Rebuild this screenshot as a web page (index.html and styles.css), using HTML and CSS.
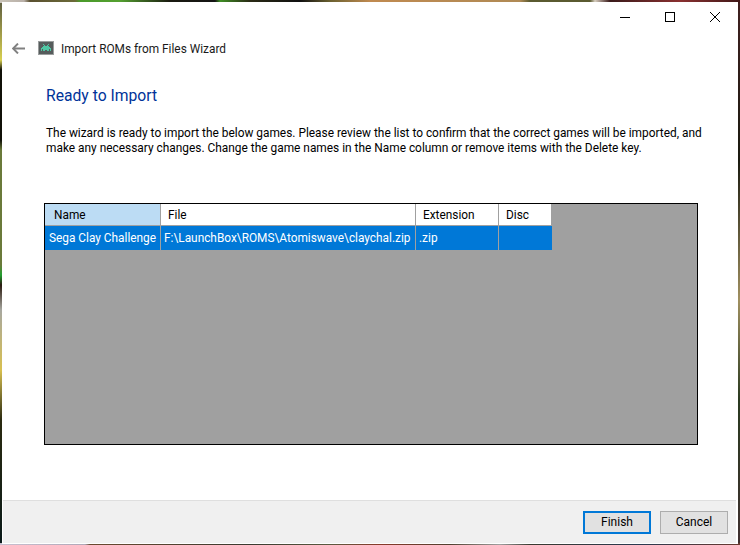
FILE: index.html
```html
<!DOCTYPE html>
<html lang="en">
<head>
    <meta charset="UTF-8">
    <meta name="viewport" content="width=device-width, initial-scale=1.0">
    <title>Import ROMs from Files Wizard</title>
    <link rel="stylesheet" href="styles.css">
</head>
<body>
    <div class="window">
        <div class="caption">
            <svg class="win-icon" width="10" height="10" viewBox="0 0 10 10" fill="none" stroke="#000" stroke-width="1">
                <line x1="0" y1="5.5" x2="10" y2="5.5"/>
            </svg>
            <svg class="win-icon" width="10" height="10" viewBox="0 0 10 10" fill="none" stroke="#000" stroke-width="1">
                <rect x="0.5" y="0.5" width="9" height="9"/>
            </svg>
            <svg class="win-icon" width="10" height="10" viewBox="0 0 10 10" fill="none" stroke="#000" stroke-width="1">
                <line x1="0" y1="0" x2="10" y2="10"/>
                <line x1="10" y1="0" x2="0" y2="10"/>
            </svg>
        </div>

        <div class="wizard-nav">
            <svg class="back-icon" width="13" height="11" viewBox="0 0 13 11" fill="none" stroke="#808080" stroke-width="2">
                <line x1="1" y1="5.5" x2="13" y2="5.5"/>
                <path d="M6 0.6 L1.1 5.5 L6 10.4"/>
            </svg>
            <svg class="app-icon" width="16" height="14" viewBox="0 0 16 14">
                <rect x="0.5" y="0.5" width="15" height="13" fill="#565c5c" stroke="#9a9d9d"/>
                <path fill="#4fc7a4" d="M5 3h1v1h1v1h2V4h1V3h1v1h-1v1h1v1h1v1h1v3h-1V8h-1v2h-2V9H7v1H5V8H4v2H3V7h1V6h1V5h1V4H5z"/>
            </svg>
            <span class="wizard-title">Import ROMs from Files Wizard</span>
        </div>

        <div class="content">
            <h1 class="heading">Ready to Import</h1>
            <p class="intro">The wizard is ready to import the below games. Please review the list to confirm that the correct games will be imported, and make any necessary changes. Change the game names in the Name column or remove items with the Delete key.</p>

            <div class="grid-view">
                <div class="grid-rows">
                    <div class="cell head head-active">Name</div>
                    <div class="cell head">File</div>
                    <div class="cell head">Extension</div>
                    <div class="cell head">Disc</div>
                    <div class="cell row">Sega Clay Challenge</div>
                    <div class="cell row">F:\LaunchBox\ROMS\Atomiswave\claychal.zip</div>
                    <div class="cell row">.zip</div>
                    <div class="cell row"></div>
                </div>
            </div>
        </div>

        <div class="footer">
            <button class="btn btn-default">Finish</button>
            <button class="btn">Cancel</button>
        </div>
    </div>
</body>
</html>
```

FILE: styles.css
```css
html, body {
    height: 100%;
}

body {
    margin: 0;
    box-sizing: border-box;
    padding: 2px 2px 1px 2px;
    overflow: hidden;
    font-family: Roboto, "Noto Sans", Arial, sans-serif;
    /* desktop wallpaper showing around the window */
    background:
        linear-gradient(90deg, #c9c3b8 0, #b9b0a8 24px, #5a5030 30px, #6b6a38 75px, #4a9a2a 80px, #54a030 120px, #1a1a10 170px, #141414 215px, #3f8f25 220px, #2a2a15 250px, #101010 300px, #6a6030 330px, #c08a50 370px, #b08a55 520px, #5a5a30 530px, #5a5a30 590px, #d8cfc0 595px, #3a1a1a 610px, #8a3030 680px, #401818 740px) top / 100% 3px no-repeat,
        linear-gradient(90deg, #c8c0d0 0, #b0a8b8 85px, #6a4a30 90px, #3a3a30 250px, #5a5a40 330px, #8a3a2a 380px, #504030 450px, #a0a0a0 500px, #3a3a30 530px, #2a3a50 640px, #6a3a30 740px) bottom / 100% 2px no-repeat,
        linear-gradient(180deg, #5a5a40 0, #d8d050 60px, #101008 70px, #101008 140px, #6a7a3a 150px, #6a7a3a 265px, #20a030 275px, #2a1a10 285px, #a8a8a0 310px, #d8c050 370px, #2a2a10 420px, #0a1a1a 545px) left / 2px 100% no-repeat,
        linear-gradient(180deg, #402020 0, #1a1a10 160px, #a09060 300px, #2a3a20 400px, #403030 545px) right / 2px 100% no-repeat;
}

.window {
    height: 100%;
    display: flex;
    flex-direction: column;
    background: #fff;
}

/* top right window buttons */
.caption {
    height: 28px;
    padding-top: 10px;
    box-sizing: border-box;
    display: flex;
    justify-content: flex-end;
    gap: 35px;
    padding-right: 18px;
}

.win-icon {
    display: block;
}

.wizard-nav {
    height: 36px;
    display: flex;
    align-items: center;
    padding-left: 10px;
    color: #1a1a1a;
}

.back-icon {
    margin-right: 13px;
}

.app-icon {
    margin-right: 7px;
}

.wizard-title {
    font-size: 11.85px;
    padding-top: 2px;
}

.content {
    flex: 1;
    padding: 0 30px 0 44px;
}

.heading {
    margin: 20px 0 0;
    font-size: 15.7px;
    line-height: 20px;
    font-weight: 400;
    color: #003399;
}

.intro {
    margin: 20px 0 0;
    font-size: 11.9px;
    line-height: 15px;
    color: #000;
}

.grid-view {
    margin: 47px 10px 0 -2px;
    height: 242px;
    box-sizing: border-box;
    border: 1px solid #000;
    background: #a0a0a0;
}

.grid-rows {
    display: grid;
    grid-template-columns: 116px 255px 83px 53px;
    grid-template-rows: 22px 24px;
    width: 507px;
}

.cell {
    box-sizing: border-box;
    font-size: 11.85px;
    white-space: nowrap;
    overflow: hidden;
    display: flex;
    align-items: center;
    border-right: 1px solid #a0a0a0;
}

.head {
    background: #fff;
    color: #000;
    padding-left: 7px;
    border-bottom: 1px solid #a0a0a0;
}

.head-active {
    background: #bcdcf4;
    padding-left: 9px;
}

.row {
    background: #0078d7;
    color: #fff;
    padding-left: 3px;
}

.row:nth-child(5) {
    padding-left: 4px;
}

.row:last-child {
    border-right: none;
}

.footer {
    height: 43px;
    margin: 0 2px 1px 1px;
    box-sizing: border-box;
    border-top: 1px solid #dfdfdf;
    background: #f0f0f0;
    display: flex;
    justify-content: flex-end;
    align-items: center;
    gap: 9px;
    padding-right: 8px;
}

.btn {
    width: 68px;
    height: 23px;
    box-sizing: border-box;
    padding: 0;
    border: 1px solid #adadad;
    background: #e1e1e1;
    color: #000;
    font-family: inherit;
    font-size: 12px;
}

.btn-default {
    border: 2px solid #0078d7;
}
```
